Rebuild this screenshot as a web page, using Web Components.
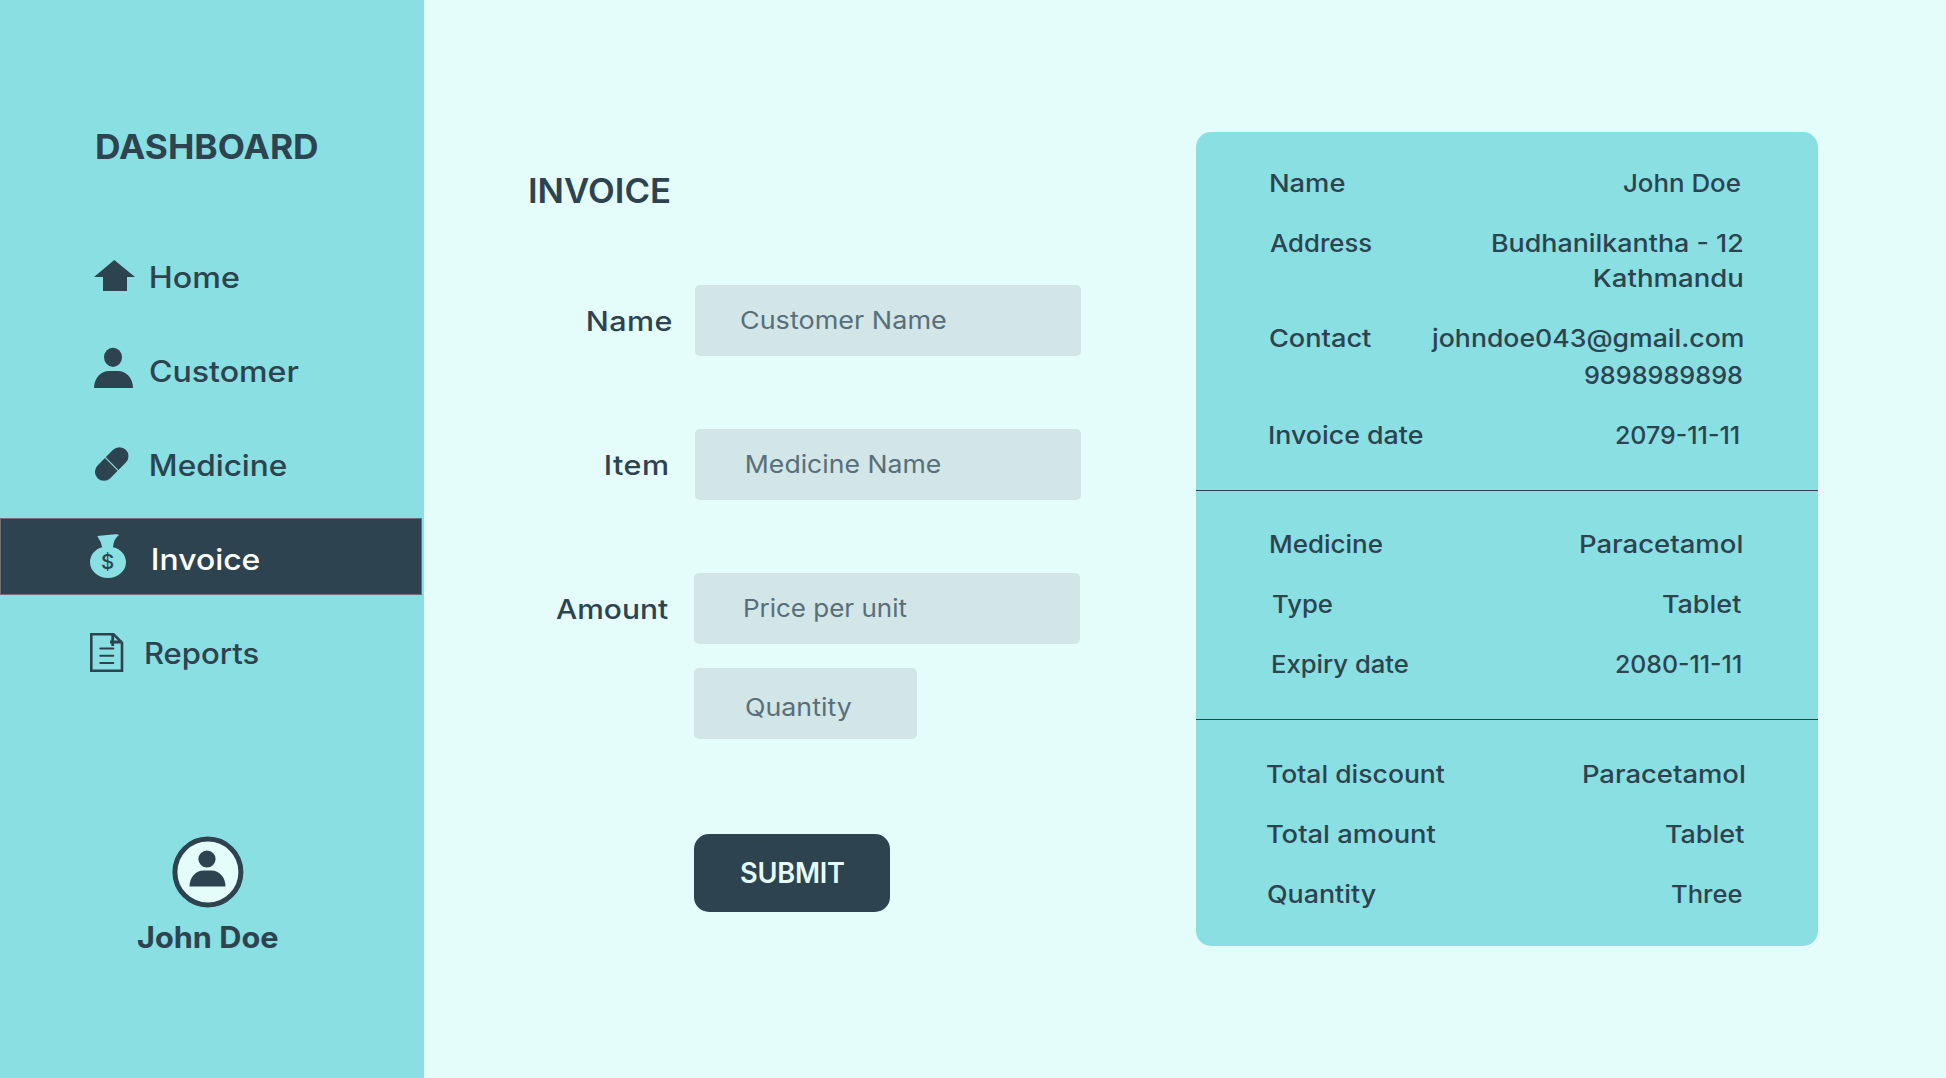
<!DOCTYPE html>
<html lang="en">
<head>
<meta charset="utf-8">
<title>Invoice</title>
<style>
html,body{margin:0;height:100%}
body{font-family:Inter,"Open Sans",sans-serif;color:#2e4350;background:#e4fcfa;overflow:hidden}
</style>
</head>
<body>
<invoice-app></invoice-app>
<script>
const define = (name, html, extra) => {
  const t = document.createElement('template');
  t.innerHTML = html;
  customElements.define(name, class extends HTMLElement {
    constructor() {
      super();
      this.attachShadow({mode: 'open'}).appendChild(t.content.cloneNode(true));
    }
    connectedCallback() { if (extra) extra(this); }
  });
};

/* Text line widened, then tracked, so that its glyphs span exactly the width given in "w". */
const ctx = document.createElement('canvas').getContext('2d');
define('fit-text', `<style>
:host{display:block;flex:none;white-space:nowrap;line-height:36px;height:36px;box-sizing:border-box}
span{display:block;transform-origin:0 0}
</style><span><slot></slot></span>`, el => {
  const size = +el.getAttribute('size'), weight = el.getAttribute('weight') || 500, w = +el.getAttribute('w');
  const text = el.textContent.trim();
  ctx.font = `${weight} ${size}px Inter, "Open Sans", sans-serif`;
  const m = ctx.measureText(text);
  const ink = m.actualBoundingBoxLeft + m.actualBoundingBoxRight;
  const scale = Math.max(.97, Math.min(1.13, w / ink));
  const inner = w / scale;
  const ls = (inner - ink) / (text.length - 1);
  Object.assign(el.style, {fontSize: size + 'px', fontWeight: weight, width: w + 'px'});
  Object.assign(el.shadowRoot.querySelector('span').style, {
    width: inner.toFixed(2) + 'px', transform: `scaleX(${scale.toFixed(4)})`,
    letterSpacing: ls.toFixed(3) + 'px', textIndent: m.actualBoundingBoxLeft.toFixed(2) + 'px'
  });
});

define('nav-item', `<style>
:host{display:flex;align-items:center;width:422px;height:77px;box-sizing:border-box;padding-left:90px}
:host([active]){background:#2e4350;color:#fff;box-shadow:inset 0 0 0 1px #707070}
::slotted(svg){flex:none;display:block;width:45px;height:77px}
::slotted(fit-text){margin-top:7px}
</style><slot name="icon"></slot><slot></slot>`);

define('user-badge', `<style>
:host{display:flex;flex-direction:column}
svg{display:block;width:72px;height:72px;margin-left:171.5px}
</style>
<svg viewBox="171.5 836.5 72 72"><circle cx="207.4" cy="872.5" r="33" fill="#e4fcfa" stroke="#2e4350" stroke-width="5"/>
<circle cx="206.5" cy="859.5" r="8.6" fill="#2e4350"/><path d="M189 887C189 878 195 871 203 871H211C219 871 225 878 225 887Z" fill="#2e4350"/></svg>
<slot></slot>`);

define('side-bar', `<style>
:host{display:flex;flex-direction:column;flex:none;width:424px;height:1078px;background:#89dfe1}
.title{margin:128.7px 0 0 97px}
nav{display:flex;flex-direction:column;gap:17px;margin-top:71.3px}
user-badge{margin-top:147.5px}
</style>
<fit-text class="title" size="34" weight="700" w="220">DASHBOARD</fit-text>
<nav>
<nav-item><svg slot="icon" viewBox="90 236 45 77"><path d="M114.3 260L135 277H127V291H103V277H94Z" fill="#2e4350"/></svg><fit-text size="29.3" weight="450" w="87.5" style="margin-left:15.7px">Home</fit-text></nav-item>
<nav-item><svg slot="icon" viewBox="90 330 45 77"><g fill="#2e4350"><ellipse cx="113" cy="357.3" rx="9" ry="9.6"/><path d="M94 388C94 378 101 371 109 371H118C126 371 133 378 133 388Z"/></g></svg><fit-text size="29.3" weight="450" w="148.5" style="margin-left:15px">Customer</fit-text></nav-item>
<nav-item><svg slot="icon" viewBox="90 424 45 77"><g transform="rotate(-45 111.7 464)"><rect x="91.7" y="455" width="40" height="18" rx="9" fill="#2e4350"/><path d="M111.7 454V474" stroke="#89dfe1" stroke-width="1.2"/></g></svg><fit-text size="29.3" weight="450" w="135" style="margin-left:16px">Medicine</fit-text></nav-item>
<nav-item active><svg slot="icon" viewBox="90 518 45 77"><path d="M97.3 536L107 535L115 534.3Q119 534 118.8 535.2Q113.4 539 113 547.2C121 549 126 555 126 562.3C126 571 118 578 108 578C98 578 90 571 90 562.3C90 555 95 549 102.2 547.2Q101 541.5 97.3 536Z" fill="#89dfe1"/><text x="107.5" y="569.3" text-anchor="middle" font-family="Inter" font-weight="500" font-size="20.5" fill="#2e4350">$</text></svg><fit-text size="29.3" weight="550" w="106" style="margin-left:18.3px">Invoice</fit-text></nav-item>
<nav-item><svg slot="icon" viewBox="90 612 45 77"><g fill="none" stroke="#2e4350"><path d="M91.3 634.3H113.5L122 642.7V670.8H91.3Z" stroke-width="2.6"/><path d="M112.7 634V646M122 642H110" stroke-width="2.8"/><path d="M100.3 648.5H113.3M100.3 655.8H113.3M100.3 663H113.3" stroke-width="2" stroke-linecap="round"/></g></svg><fit-text size="29.3" weight="450" w="112.5" style="margin-left:11px">Reports</fit-text></nav-item>
</nav>
<user-badge><fit-text size="29.3" weight="700" w="141" style="margin:11.6px 0 0 136.5px">John Doe</fit-text></user-badge>`);

define('field-row', `<style>
:host{display:flex;align-items:center;height:71px;width:551px}
.label{flex:none;display:flex;width:var(--label,164.5px);padding-top:4px}
.box{display:flex;align-items:center;box-sizing:border-box;width:var(--box,386px);height:71px;border-radius:5px;background:#d2e6e8;color:#586f7a}
</style><div class="label"><slot name="label"></slot></div><div class="box"><slot></slot></div>`);

define('submit-button', `<style>
:host{display:flex;align-items:center;width:196px;height:78px;box-sizing:border-box;padding-left:46.5px;border-radius:15px;background:#2e4350;color:#e4fcfa}
</style><slot></slot>`);

define('invoice-form', `<style>
:host{display:flex;flex-direction:column;flex:none;width:772px;box-sizing:border-box;padding:172.6px 0 0 106px}
</style>
<fit-text size="34" weight="600" w="139.5">INVOICE</fit-text>
<field-row style="margin-top:76.4px"><fit-text slot="label" size="27" w="83.5" style="margin-left:57.5px">Name</fit-text><fit-text size="24.5" weight="400" w="205.5" style="margin-left:46.3px">Customer Name</fit-text></field-row>
<field-row style="margin-top:73px"><fit-text slot="label" size="27" w="62" style="margin-left:76px">Item</fit-text><fit-text size="24.5" weight="400" w="194" style="margin-left:52.5px">Medicine Name</fit-text></field-row>
<field-row style="margin-top:73px;--label:164px"><fit-text slot="label" size="27" w="112" style="margin-left:25.5px">Amount</fit-text><fit-text size="24.5" weight="400" w="162" style="margin-left:51px">Price per unit</fit-text></field-row>
<field-row style="margin-top:24px;--label:164px;--box:223px"><fit-text size="24.5" weight="400" w="106" style="margin:7.6px 0 0 52px">Quantity</fit-text></field-row>
<submit-button style="margin:95px 0 0 164px"><fit-text size="28" weight="600" w="103.5">SUBMIT</fit-text></submit-button>`);

define('detail-row', `<style>
:host{display:flex;align-items:flex-start;justify-content:space-between}
.value{display:flex;flex-direction:column;align-items:flex-end}
</style><slot name="label"></slot><div class="value"><slot></slot></div>`);

define('invoice-summary', `<style>
:host{display:flex;flex-direction:column;flex:none;width:622px;height:814px;margin-top:132px;border-radius:15px;background:#89dfe1;overflow:hidden}
section{display:flex;flex-direction:column;gap:24px;box-sizing:border-box;padding:33px 76px 0 70px}
section+section{padding-top:35.3px}
section:last-child{padding-top:36.3px}
.a{height:359px;border-bottom:1px solid #2e4350}.b{height:229px;border-bottom:1px solid #2e4350}.c{height:226px}
</style><section class="a"></section><section class="b"></section><section class="c"></section>`, el => {
  // [label, label x, label width, ...[value, value width, right edge, top offset]]
  const data = {
    a: [['Name', 1269.5, 75, ['John Doe', 116.5, 1740.5, 0]],
        ['Address', 1270, 102, ['Budhanilkantha - 12', 250.5, 1742, 0], ['Kathmandu', 148, 1742, -1]],
        ['Contact', 1269.5, 101, ['johndoe043@gmail.com', 311.5, 1742, 0], ['9898989898', 157.5, 1742, .7]],
        ['Invoice date', 1269, 154, ['2079-11-11', 123, 1739, 0]]],
    b: [['Medicine', 1270, 112.5, ['Paracetamol', 162, 1742, 0]],
        ['Type', 1272.5, 59.5, ['Tablet', 78, 1741, 0]],
        ['Expiry date', 1272, 136.5, ['2080-11-11', 125, 1741, 0]]],
    c: [['Total discount', 1266.5, 177.5, ['Paracetamol', 161.5, 1744.5, 0]],
        ['Total amount', 1267, 168.5, ['Tablet', 78, 1744, 0]],
        ['Quantity', 1268, 108, ['Three', 70, 1742, 0]]]
  };
  for (const key in data) {
    el.shadowRoot.querySelector('.' + key).innerHTML = data[key].map(([label, x, w, ...values]) =>
      `<detail-row><fit-text slot="label" size="24.5" weight="460" w="${w}" style="margin-left:${x - 1266}px">${label}</fit-text>` +
      values.map(([v, vw, r, dy]) => `<fit-text size="24.5" weight="460" w="${vw}" style="margin:${dy}px ${1742 - r}px 0 0">${v}</fit-text>`).join('') +
      `</detail-row>`).join('');
  }
});

define('invoice-app', `<style>
:host{display:flex;align-items:flex-start;width:1946px;height:1078px;background:#e4fcfa}
</style><side-bar></side-bar><invoice-form></invoice-form><invoice-summary></invoice-summary>`);
</script>
</body>
</html>
